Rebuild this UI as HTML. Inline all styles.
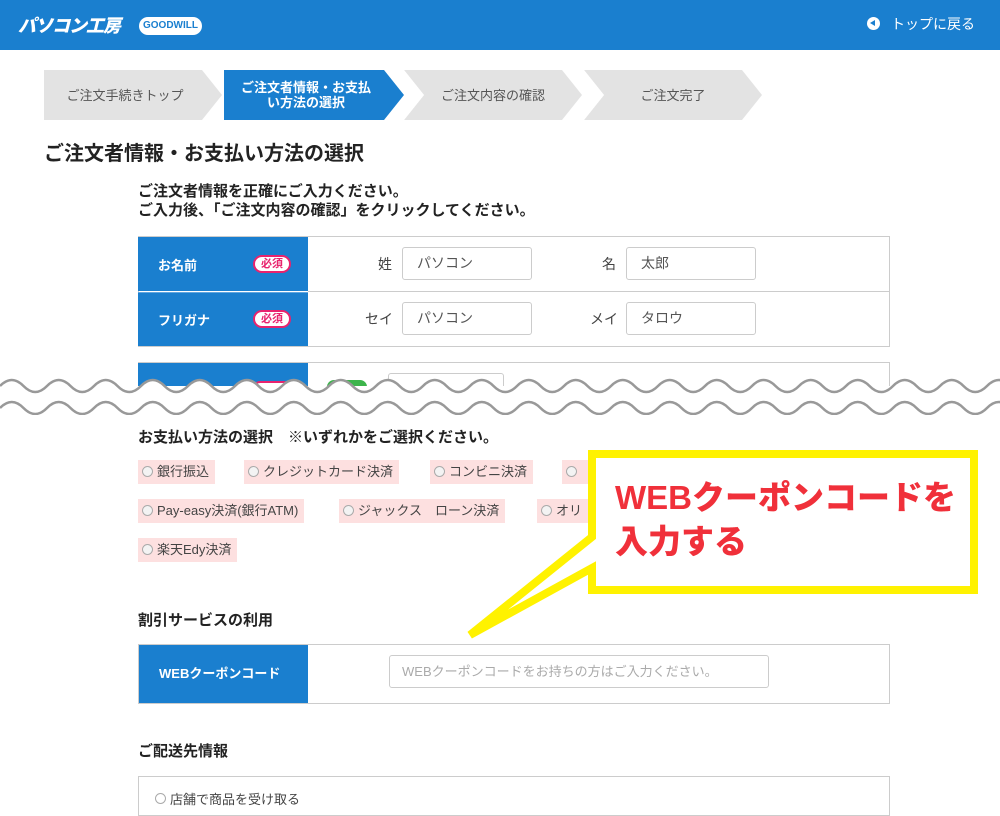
<!DOCTYPE html>
<html><head><meta charset="utf-8"><style>
*{margin:0;padding:0;box-sizing:border-box}
body{width:1000px;height:800px;overflow:hidden;background:#fff;font-family:"Liberation Sans","Noto Sans CJK JP",sans-serif;color:#333;position:relative}
.a{position:absolute}
.hd{left:0;top:0;width:1000px;height:50px;background:#1a7fcf}
.step{height:50px;top:70px;font-size:13px;display:flex;align-items:center;justify-content:center;text-align:center;line-height:15px}
.lab{background:#1a7fcf;color:#fff;font-weight:bold;font-size:13px}
.req{background:#fff;color:#e8236e;border:2px solid #e8236e;border-radius:10px;font-size:11px;font-weight:bold;width:38px;height:18px;line-height:14px;text-align:center}
.inp{border:1px solid #ccc;border-radius:3px;height:33px;font-size:14px;color:#555;padding-left:14px;line-height:31px;background:#fff}
.chip{background:#fde0e0;height:24px;font-size:13px;color:#444;line-height:24px;padding-left:4px;padding-right:6px}
.chip i{display:inline-block;width:11px;height:11px;border:1px solid #aaa;border-radius:50%;background:#f3f3f3;vertical-align:-1px;margin-right:4px}
.h{font-weight:bold;font-size:15px;color:#222}
</style></head><body>
<div class="a hd"></div>
<div class="a" style="left:18px;top:12px;color:#fff;font-weight:900;font-size:18px;font-style:italic;letter-spacing:-1px">パソコン工房</div>
<div class="a" style="left:139px;top:17px;width:63px;height:18px;background:#fff;border-radius:9px;color:#1a7fcf;font-size:10px;font-weight:bold;text-align:center;line-height:18px">GOODWILL</div>
<div class="a" style="left:867px;top:17px;width:13px;height:13px;border-radius:50%;background:#fff"></div>
<div class="a" style="left:870px;top:20px;width:0;height:0;border-top:3.5px solid transparent;border-bottom:3.5px solid transparent;border-right:5px solid #1a7fcf"></div>
<div class="a" style="left:891px;top:14px;color:#fff;font-size:14px">トップに戻る</div>

<svg class="a" style="left:0;top:70px" width="800" height="50">
<polygon points="44,0 202,0 222,25 202,50 44,50" fill="#e3e3e3"/>
<polygon points="224,0 384,0 404,25 384,50 224,50" fill="#1a7fcf"/>
<polygon points="404,0 562,0 582,25 562,50 404,50 424,25" fill="#e3e3e3"/>
<polygon points="584,0 742,0 762,25 742,50 584,50 604,25" fill="#e3e3e3"/>
<polygon points="404,0 424,25 404,50" fill="#fff"/><polygon points="584,0 604,25 584,50" fill="#fff"/>
</svg>
<div class="a step" style="left:44px;width:162px;color:#555">ご注文手続きトップ</div>
<div class="a step" style="left:228px;width:156px;color:#fff;font-weight:bold">ご注文者情報・お支払<br>い方法の選択</div>
<div class="a step" style="left:420px;width:146px;color:#555">ご注文内容の確認</div>
<div class="a step" style="left:600px;width:146px;color:#555">ご注文完了</div>

<div class="a" style="left:44px;top:137px;font-size:20px;font-weight:bold;color:#222">ご注文者情報・お支払い方法の選択</div>
<div class="a h" style="left:138px;top:182px;line-height:19px">ご注文者情報を正確にご入力ください。<br>ご入力後、「ご注文内容の確認」をクリックしてください。</div>

<div class="a" style="left:138px;top:236px;width:752px;height:111px;border:1px solid #ccc"></div>
<div class="a" style="left:308px;top:291px;width:582px;height:1px;background:#ccc"></div>
<div class="a lab" style="left:138px;top:237px;width:170px;height:54px"></div>
<div class="a lab" style="left:138px;top:292px;width:170px;height:54px;border-top:1px solid #5fa5e0"></div>
<div class="a" style="left:158px;top:255px;color:#fff;font-weight:bold;font-size:13px">お名前</div>
<div class="a" style="left:158px;top:310px;color:#fff;font-weight:bold;font-size:13px">フリガナ</div>
<div class="a req" style="left:253px;top:255px">必須</div>
<div class="a req" style="left:253px;top:310px">必須</div>
<div class="a" style="left:378px;top:254px;font-size:14px;color:#444">姓</div>
<div class="a" style="left:602px;top:254px;font-size:14px;color:#444">名</div>
<div class="a" style="left:365px;top:309px;font-size:14px;color:#444">セイ</div>
<div class="a" style="left:590px;top:309px;font-size:14px;color:#444">メイ</div>
<div class="a inp" style="left:402px;top:247px;width:130px">パソコン</div>
<div class="a inp" style="left:626px;top:247px;width:130px">太郎</div>
<div class="a inp" style="left:402px;top:302px;width:130px">パソコン</div>
<div class="a inp" style="left:626px;top:302px;width:130px">タロウ</div>

<div class="a" style="left:138px;top:362px;width:752px;height:40px;border:1px solid #ccc;border-bottom:none"></div>
<div class="a lab" style="left:138px;top:363px;width:170px;height:40px"></div>
<div class="a" style="left:253px;top:381px;width:38px;height:14px;background:#fff;border:2px solid #e8236e;border-radius:8px"></div>
<div class="a" style="left:327px;top:380px;width:40px;height:14px;background:#3cb44b;border-radius:8px"></div>
<div class="a" style="left:388px;top:373px;width:116px;height:30px;border:1px solid #ccc;border-radius:3px"></div>
<div class="a" style="left:0;top:386px;width:1000px;height:18px;background:#fff"></div>
<svg class="a" style="left:0;top:370px" width="1000" height="45">
<path d="M0,16 q11.75,-12 23.5,0 t23.5,0 t23.5,0 t23.5,0 t23.5,0 t23.5,0 t23.5,0 t23.5,0 t23.5,0 t23.5,0 t23.5,0 t23.5,0 t23.5,0 t23.5,0 t23.5,0 t23.5,0 t23.5,0 t23.5,0 t23.5,0 t23.5,0 t23.5,0 t23.5,0 t23.5,0 t23.5,0 t23.5,0 t23.5,0 t23.5,0 t23.5,0 t23.5,0 t23.5,0 t23.5,0 t23.5,0 t23.5,0 t23.5,0 t23.5,0 t23.5,0 t23.5,0 t23.5,0 t23.5,0 t23.5,0 t23.5,0 t23.5,0 t23.5,0 L1000,45 L0,45Z" fill="#fff"/>
<path d="M0,16 q11.75,-12 23.5,0 t23.5,0 t23.5,0 t23.5,0 t23.5,0 t23.5,0 t23.5,0 t23.5,0 t23.5,0 t23.5,0 t23.5,0 t23.5,0 t23.5,0 t23.5,0 t23.5,0 t23.5,0 t23.5,0 t23.5,0 t23.5,0 t23.5,0 t23.5,0 t23.5,0 t23.5,0 t23.5,0 t23.5,0 t23.5,0 t23.5,0 t23.5,0 t23.5,0 t23.5,0 t23.5,0 t23.5,0 t23.5,0 t23.5,0 t23.5,0 t23.5,0 t23.5,0 t23.5,0 t23.5,0 t23.5,0 t23.5,0 t23.5,0 t23.5,0" fill="none" stroke="#999" stroke-width="2.5"/>
<path d="M0,38 q11.75,-12 23.5,0 t23.5,0 t23.5,0 t23.5,0 t23.5,0 t23.5,0 t23.5,0 t23.5,0 t23.5,0 t23.5,0 t23.5,0 t23.5,0 t23.5,0 t23.5,0 t23.5,0 t23.5,0 t23.5,0 t23.5,0 t23.5,0 t23.5,0 t23.5,0 t23.5,0 t23.5,0 t23.5,0 t23.5,0 t23.5,0 t23.5,0 t23.5,0 t23.5,0 t23.5,0 t23.5,0 t23.5,0 t23.5,0 t23.5,0 t23.5,0 t23.5,0 t23.5,0 t23.5,0 t23.5,0 t23.5,0 t23.5,0 t23.5,0 t23.5,0" fill="none" stroke="#999" stroke-width="2.5"/>
</svg>

<div class="a h" style="left:138px;top:426px">お支払い方法の選択　※いずれかをご選択ください。</div>
<div class="a chip" style="left:138px;top:460px"><i></i>銀行振込</div>
<div class="a chip" style="left:244px;top:460px"><i></i>クレジットカード決済</div>
<div class="a chip" style="left:430px;top:460px"><i></i>コンビニ決済</div>
<div class="a chip" style="left:562px;top:460px;width:40px"><i></i></div>
<div class="a chip" style="left:138px;top:499px"><i></i>Pay-easy決済(銀行ATM)</div>
<div class="a chip" style="left:339px;top:499px"><i></i>ジャックス　ローン決済</div>
<div class="a chip" style="left:537px;top:499px;width:60px"><i></i>オリ</div>
<div class="a chip" style="left:138px;top:538px"><i></i>楽天Edy決済</div>

<div class="a h" style="left:138px;top:609px">割引サービスの利用</div>
<div class="a" style="left:138px;top:644px;width:752px;height:60px;border:1px solid #ccc"></div>
<div class="a lab" style="left:139px;top:645px;width:169px;height:58px;line-height:58px;padding-left:20px">WEBクーポンコード</div>
<div class="a inp" style="left:389px;top:655px;width:380px;color:#aaa;font-size:13px;padding-left:12px">WEBクーポンコードをお持ちの方はご入力ください。</div>

<div class="a h" style="left:138px;top:740px">ご配送先情報</div>
<div class="a" style="left:138px;top:776px;width:752px;height:40px;border:1px solid #ccc"></div>
<div class="a" style="left:155px;top:789px;font-size:13px;color:#444"><span style="display:inline-block;width:11px;height:11px;border:1px solid #aaa;border-radius:50%;margin-right:4px"></span>店舗で商品を受け取る</div>

<svg class="a" style="left:0;top:0" width="1000" height="800">
<path d="M592,454 H974 V590 H592 V568 L470,635 L592,537 Z" fill="#fff" stroke="#fff200" stroke-width="8" stroke-linejoin="miter"/>
</svg>
<div class="a" style="left:615px;top:476px;color:#f0303a;font-weight:900;font-size:33px;line-height:44px">WEBクーポンコードを<br>入力する</div>
</body></html>
